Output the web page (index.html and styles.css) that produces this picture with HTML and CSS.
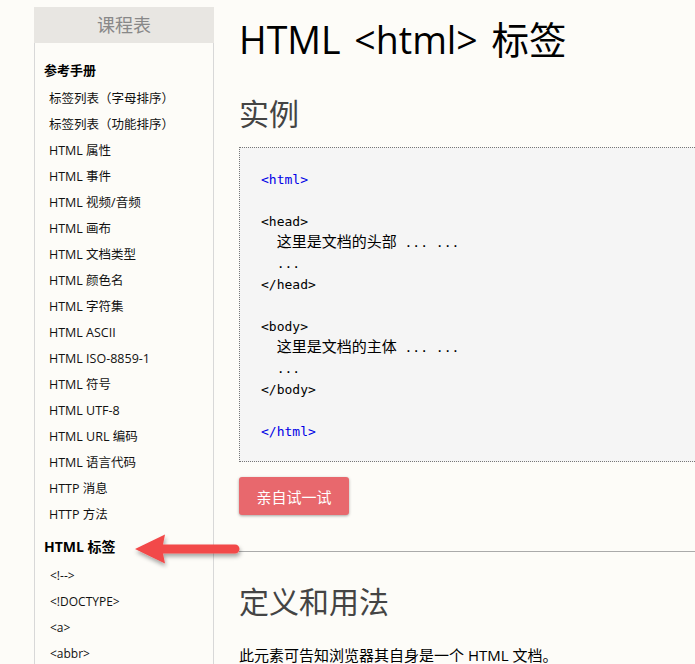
FILE: index.html
```html
<!DOCTYPE html>
<html lang="zh-CN">
<head>
<meta charset="utf-8">
<title>HTML &lt;html&gt; 标签</title>
<link rel="stylesheet" href="styles.css">
</head>
<body>
<div class="page">
  <aside class="sidebar">
    <div class="side-head">课程表</div>
    <div class="side-body">
      <h3 class="side-title">参考手册</h3>
      <ul class="side-list">
        <li>标签列表（字母排序）</li>
        <li>标签列表（功能排序）</li>
        <li>HTML 属性</li>
        <li>HTML 事件</li>
        <li>HTML 视频/音频</li>
        <li>HTML 画布</li>
        <li>HTML 文档类型</li>
        <li>HTML 颜色名</li>
        <li>HTML 字符集</li>
        <li>HTML ASCII</li>
        <li>HTML ISO-8859-1</li>
        <li>HTML 符号</li>
        <li>HTML UTF-8</li>
        <li>HTML URL 编码</li>
        <li>HTML 语言代码</li>
        <li>HTTP 消息</li>
        <li>HTTP 方法</li>
      </ul>
      <h3 class="side-title big">HTML 标签</h3>
      <ul class="side-list tags">
        <li>&lt;!--&gt;</li>
        <li>&lt;!DOCTYPE&gt;</li>
        <li>&lt;a&gt;</li>
        <li>&lt;abbr&gt;</li>
      </ul>
    </div>
  </aside>
  <main class="content">
    <h1 class="title">HTML &lt;html&gt; 标签</h1>
    <h2 class="section">实例</h2>
    <div class="example"><pre class="code"><span class="tag">&lt;html&gt;</span>

&lt;head&gt;
  <span class="cn">这里是文档的头部</span> ... ...
  ...
&lt;/head&gt;

&lt;body&gt;
  <span class="cn">这里是文档的主体</span> ... ...
  ...
&lt;/body&gt;

<span class="tag">&lt;/html&gt;</span></pre></div>
    <button class="try">亲自试一试</button>
    <hr class="rule">
    <h2 class="section def">定义和用法</h2>
    <p class="text">此元素可告知浏览器其自身是一个 HTML 文档。</p>
  </main>
  <svg class="arrow" width="130" height="50" viewBox="0 0 130 50" aria-hidden="true">
    <defs>
      <filter id="sh" x="-20%" y="-40%" width="140%" height="200%">
        <feDropShadow dx="1" dy="3" stdDeviation="2" flood-color="#000" flood-opacity="0.35"/>
      </filter>
    </defs>
    <g filter="url(#sh)" fill="#f24848">
      <path d="M5 21 L35 6.5 L33 16.5 L105 16.5 A4.5 4.5 0 0 1 105 25.5 L33 25.5 L35 35.5 Z"/>
    </g>
  </svg>
</div>
</body>
</html>
```
FILE: styles.css
```css
html, body {
  margin: 0;
  padding: 0;
}
body {
  background: #fdfcf8;
  color: #000;
  font-family: "Open Sans", "Noto Sans CJK SC", sans-serif;
  overflow: hidden;
}
.page {
  position: relative;
  display: flex;
  align-items: stretch;
  min-height: 664px;
  width: 100vw;
  overflow: hidden;
}
.sidebar {
  flex: 0 0 180px;
  margin-left: 34px;
  margin-top: 7px;
  display: flex;
  flex-direction: column;
}
.side-head {
  height: 36px;
  line-height: 36px;
  background: #e8e6e2;
  color: #888;
  font-size: 18px;
  text-align: center;
}
.side-body {
  flex: 1;
  border-left: 1px solid #d8d8d8;
  border-right: 1px solid #d8d8d8;
  padding-top: 14px;
}
.side-title {
  margin: 0;
  padding-left: 9px;
  font-size: 13px;
  font-weight: bold;
  line-height: 26px;
}
.side-title.big {
  font-size: 14px;
  margin-top: 6px;
}
.side-list {
  list-style: none;
  margin: 3px 0 0;
  padding: 0 0 0 14px;
  font-size: 12.5px;
  color: #111;
}
.side-list li {
  line-height: 26px;
  height: 26px;
}
.side-list.tags {
  margin-top: 3px;
  padding-left: 15px;
  font-size: 12px;
}
.content {
  flex: 1;
  margin-left: 25px;
  margin-right: -40px;
  display: flex;
  flex-direction: column;
  align-items: flex-start;
}
.title {
  margin: 18px 0 0;
  font-size: 37.5px;
  font-weight: normal;
  line-height: 44px;
  word-spacing: 4px;
  color: #000;
}
.section {
  margin: 32px 0 0;
  font-size: 30px;
  font-weight: normal;
  line-height: 40px;
  color: #444;
}
.example {
  align-self: stretch;
  margin-top: 13px;
  background: #f5f5f5;
  border: 1px dotted #777;
  padding: 21px 21px 19px;
}
.code {
  margin: 0;
  font-family: "DejaVu Sans Mono", monospace;
  font-size: 13px;
  line-height: 21px;
  color: #000;
}
.code .tag {
  color: #0000e6;
}
.code .cn {
  font-family: "Noto Sans CJK SC", sans-serif;
  font-size: 15px;
  line-height: 1;
}
.try {
  margin-top: 15px;
  width: 110px;
  height: 38px;
  border: none;
  border-radius: 3px;
  background: #e8686d;
  color: #fff;
  font-family: "Noto Sans CJK SC", sans-serif;
  font-size: 15px;
  box-shadow: 0 1px 3px rgba(0, 0, 0, 0.35);
  padding: 0;
}
.rule {
  align-self: stretch;
  margin: 36px 0 0;
  border: none;
  border-top: 1px solid #aaa;
  height: 0;
}
.section.def {
  margin-top: 30px;
}
.text {
  margin: 21px 0 0;
  font-size: 15px;
  line-height: 24px;
}
.arrow {
  position: absolute;
  left: 130px;
  top: 528px;
}
```
